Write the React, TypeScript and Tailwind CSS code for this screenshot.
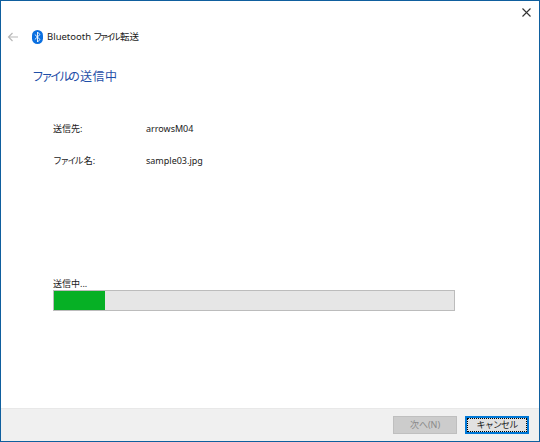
import React from "react";

const font = { fontFamily: '"Noto Sans", "Noto Sans CJK JP", sans-serif' };

const App: React.FC = () => {
  return (
    <div
      className="flex h-[442px] w-[540px] flex-col border border-[#0f5f9e] bg-white text-[#1a1a1a]"
      style={font}
    >
      <div className="flex h-5 shrink-0 justify-end pt-[7px] pr-[8px]">
        <svg width="9" height="9" viewBox="0 0 9 9" stroke="#333" strokeWidth="1.1" fill="none">
          <path d="M0.500 0.500l8 8M8.500 0.500l-8 8" />
        </svg>
      </div>

      <div className="mt-[3px] flex h-[26px] items-center pl-[6px]">
        <svg width="12" height="10" viewBox="0 0 12 10" fill="none" stroke="#b8b8b8" strokeWidth="1.2">
          <path d="M11 5H1.500M5.500 1L1.500 5l4 4" />
        </svg>
        <svg className="ml-[13px]" width="11" height="14" viewBox="0 0 11 14">
          <rect width="11" height="14" rx="5.500" fill="#0a6fe0" />
          <path d="M2.800 4.500l5.200 5-2.500 2.500V2l2.500 2.500-5.200 5" fill="none" stroke="#fff" strokeWidth="0.9" />
        </svg>
        <span className="ml-[4px] text-[9.5px] leading-none">
          Bluetooth
          <span className="ml-[2px] tracking-[-3.5px]">ファイル</span>
          <span className="ml-[3px] text-[9.5px]">転送</span>
        </span>
      </div>

      <div className="pl-[31px] pt-[18px] text-[12px] leading-[18px] text-[#1f4fa8]">
        <span className="tracking-[-3px]">ファイルの</span>
        <span className="ml-[3px] tracking-[0.5px]">送信中</span>
      </div>

      <div className="mt-[37px] grid grid-cols-[93px_1fr] gap-y-[20px] pl-[52px] text-[9px] leading-[12px]">
        <span>送信先:</span>
        <span>arrowsM04</span>
        <span>
          <span className="tracking-[-1.8px]">ファイル</span>
          <span className="ml-[2px]">名:</span>
        </span>
        <span>sample03.jpg</span>
      </div>

      <div className="mt-[111px] pl-[52px] text-[9px] leading-[12px]">送信中...</div>
      <div className="ml-[52px] h-[21px] w-[402px] border border-[#bcbcbc] bg-[#e6e6e6]">
        <div className="h-full w-[51px] bg-[#06b025]" />
      </div>

      <div className="mt-auto flex h-[33px] items-center justify-end gap-[8px] border-t border-[#e8e8e8] bg-[#f0f0f0] pr-[10px]">
        <div className="flex h-[18px] w-[64px] items-center justify-center border border-[#bfbfbf] bg-[#cccccc] text-[9px] text-[#8a8a8a]">
          <span>次へ(N)</span>
        </div>
        <div className="flex h-[18px] w-[64px] items-center justify-center border-2 border-[#0078d7] bg-[#e1e1e1] text-[9px] outline-1 -outline-offset-3 outline-dotted outline-black">
          <span className="tracking-[-0.8px]">キャンセル</span>
        </div>
      </div>
    </div>
  );
};

export default App;
